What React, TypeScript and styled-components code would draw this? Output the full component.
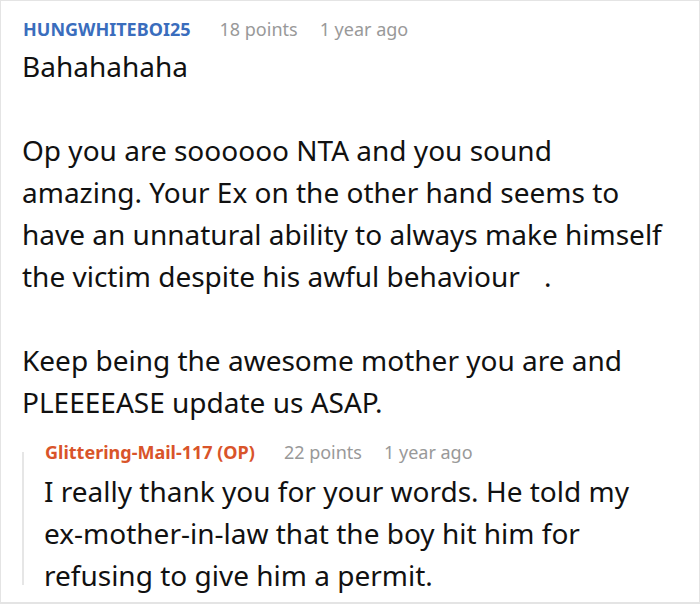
import React from "react";
import styled, { createGlobalStyle } from "styled-components";

const Global = createGlobalStyle`
  html, body { margin: 0; padding: 0; background: #fff; }
  body { font-family: "Noto Sans", "Open Sans", sans-serif; }
`;

const Card = styled.div`
  box-sizing: border-box;
  width: 700px;
  height: 604px;
  border: 1px solid #e4e4e4;
  border-bottom-width: 2px;
  padding: 17px 10px 0 21px;
  overflow: hidden;
  background: #fff;
`;

const Header = styled.div`
  display: flex;
  align-items: baseline;
  height: 22px;
  line-height: 22px;
  font-size: 18px;
`;

const Author = styled.span<{ $op?: boolean }>`
  font-weight: 700;
  color: ${(p) => (p.$op ? "#d9542a" : "#3a6dbd")};
  margin-left: 1px;
  margin-right: 29px;
`;

const Meta = styled.span`
  color: #999;
  margin-right: 22px;
`;

const Body = styled.div<{ $reply?: boolean }>`
  margin-top: ${(p) => (p.$reply ? "7px" : "5px")};
  font-size: 28px;
  line-height: 42px;
  color: #111;
  white-space: nowrap;
`;

const Gap = styled.span`
  display: inline-block;
  width: 24px;
`;

const Reply = styled.div`
  position: relative;
  margin-top: 18px;
  padding-left: 22px;
  &::before {
    content: "";
    position: absolute;
    left: 0;
    top: 11px;
    bottom: 11px;
    width: 2px;
    background: #e6e6e6;
  }
`;

export default function App() {
  return (
    <>
      <Global />
      <Card>
        <Header>
          <Author>HUNGWHITEBOI25</Author>
          <Meta>18 points</Meta>
          <Meta>1 year ago</Meta>
        </Header>
        <Body>
          Bahahahaha
          <br />
          <br />
          Op you are soooooo NTA and you sound
          <br />
          amazing. Your Ex on the other hand seems to
          <br />
          have an unnatural ability to always make himself
          <br />
          the victim despite his awful behaviour<Gap />.
          <br />
          <br />
          Keep being the awesome mother you are and
          <br />
          PLEEEEASE update us ASAP.
        </Body>
        <Reply>
          <Header>
            <Author $op>Glittering-Mail-117 (OP)</Author>
            <Meta>22 points</Meta>
            <Meta>1 year ago</Meta>
          </Header>
          <Body $reply>
            I really thank you for your words. He told my
            <br />
            ex-mother-in-law that the boy hit him for
            <br />
            refusing to give him a permit.
          </Body>
        </Reply>
      </Card>
    </>
  );
}
